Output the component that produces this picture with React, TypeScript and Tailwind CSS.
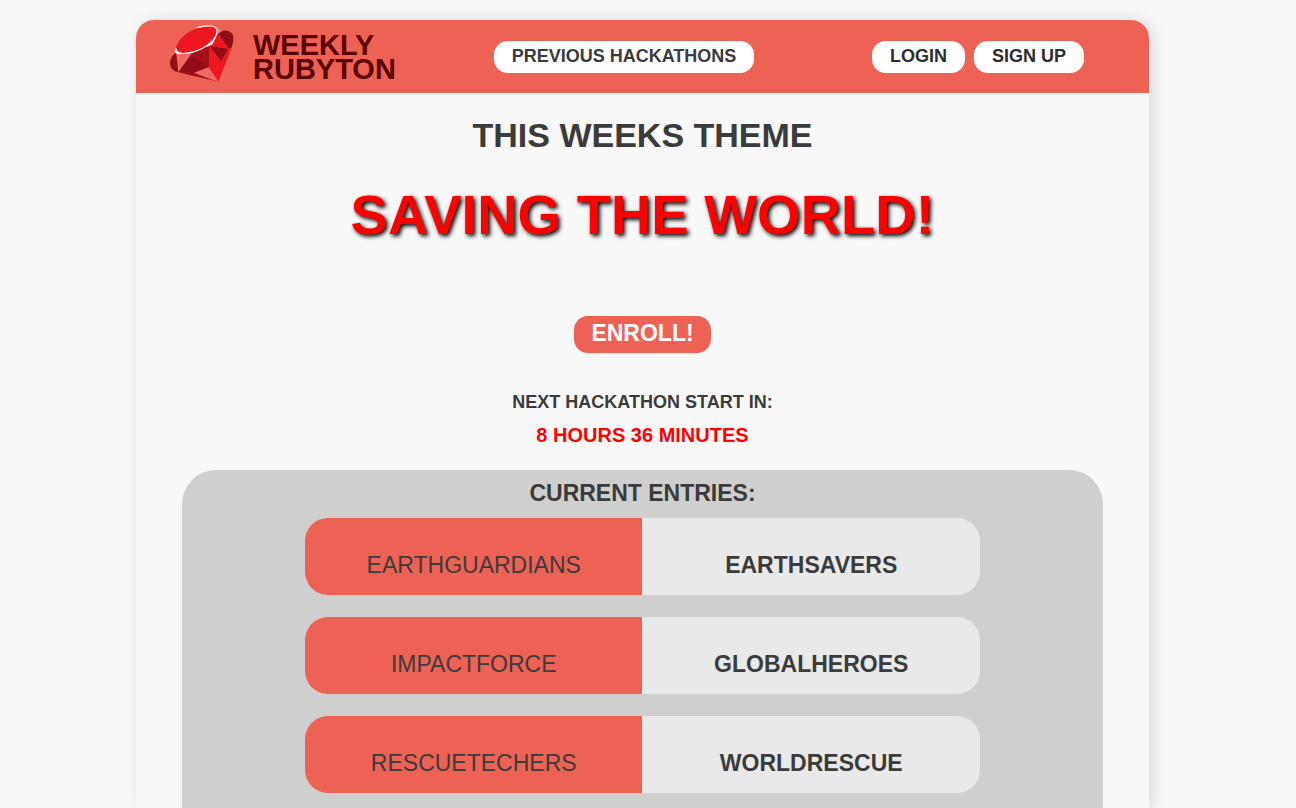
const entries = [
  ["EARTHGUARDIANS", "EARTHSAVERS"],
  ["IMPACTFORCE", "GLOBALHEROES"],
  ["RESCUETECHERS", "WORLDRESCUE"],
];

function RubyIcon() {
  return (
    <svg width="64" height="56" viewBox="0 0 192 168" overflow="visible" aria-hidden="true">
      <path d="M0 112C0 98 7 88 20 78L26 139C9 136 1 127 0 112Z" fill="#920d18" />
      <path d="M18 76L25 139L64 84Z" fill="#ef6a63" />
      <path d="M64 84L25 139L72 141L116 124Z" fill="#920d18" />
      <path d="M62 84L120 58L117 126Z" fill="#a50f1b" />
      <path d="M120 58L174 68L145 168L116 124Z" fill="#ed1722" />
      <path d="M120 60L176 68L153 106Z" fill="#920d18" />
      <path d="M120 60L141 22L176 68Z" fill="#ed1722" />
      <path d="M141 20L156 14C177 11 190 20 190 36C190 48 188 56 184 66L176 68Z" fill="#920d18" />
      <path d="M186 62L145 168L153 106L176 68Z" fill="#ed1722" />
      <path d="M25 139L72 141L145 168Z" fill="#920d18" />
      <path d="M25 139L66 144L145 168Z" fill="#ef6a63" />
      <path d="M25 138L76 140L145 166L60 147Z" fill="#920d18" />
      <path d="M72 141L116 124L145 168Z" fill="#ef6a63" />
      <path d="M137 2L160 13L142 25Z" fill="#f27870" />
      <path d="M18 70C18 46 46 18 84 6C114 -3 143 -3 141 17C140 38 110 66 73 77C44 85 20 86 18 70Z" fill="#ed1722" />
      <path d="M82 5C112 -4 143 -3 141 17C140 38 110 66 73 77C44 85 20 86 18 68" fill="none" stroke="#fff" strokeWidth="3.5" />
      <path d="M18 68V80L34 83M110 61L126 53L137 32" fill="none" stroke="#fff" strokeWidth="4" />
    </svg>
  );
}

const pill =
  "flex h-8 items-center rounded-[14px] bg-white px-[18px] pb-0.5 text-lg font-bold whitespace-nowrap";

export default function App() {
  return (
    <div className="flex min-h-screen flex-col bg-[#f8f8f8] pt-5 pr-[11px] font-['Liberation_Sans',Arial,sans-serif] text-[#3b3b3b]">
      <div className="mx-auto flex w-full max-w-[1013px] flex-1 flex-col rounded-t-[18px] bg-[#f8f8f8] shadow-[4px_0_16px_rgba(0,0,0,0.12)]">
        <header className="grid h-[73px] grid-cols-[1fr_auto_1fr] items-center rounded-t-[18px] bg-[#ee6255] pr-[65px] pl-7">
          <a href="#home" className="flex items-center gap-[19px] justify-self-start pb-1.5 pl-1.5">
            <RubyIcon />
            <span className="pt-1.5 text-[29px] leading-6 font-bold text-[#5a0000]">
              WEEKLY
              <br />
              RUBYTON
            </span>
          </a>
          <nav>
            <a href="#previous" className={pill}>PREVIOUS HACKATHONS</a>
          </nav>
          <div className="flex gap-[9px] justify-self-end text-[#2d2d2d]">
            <a href="#login" className={pill}>LOGIN</a>
            <a href="#signup" className={pill}>SIGN UP</a>
          </div>
        </header>

        <main className="flex flex-1 flex-col items-center">
          <h2 className="mt-[22px] text-[34px] leading-10 font-bold">THIS WEEKS THEME</h2>
          <h1 className="mt-7 text-[56px] leading-16 font-bold text-[#ff0000] [text-shadow:2px_2px_4px_#000]">
            SAVING THE WORLD!
          </h1>
          <button
            type="button"
            className="mt-[69px] flex h-[37px] items-center rounded-[14px] bg-[#ee6255] px-[17px] pb-0.5 text-[23px] font-bold text-white"
          >
            ENROLL!
          </button>
          <h3 className="mt-[37px] text-lg leading-6 font-bold">NEXT HACKATHON START IN:</h3>
          <p className="mt-[7px] text-xl leading-7 font-bold text-[#ff0000]">8 HOURS 36 MINUTES</p>

          <section className="mt-[21px] flex w-[91%] flex-1 flex-col items-center rounded-t-[34px] bg-[#cfcfcf] pt-[7px]">
            <h2 className="text-[23px] leading-8 font-bold">CURRENT ENTRIES:</h2>
            <ul className="mt-[9px] flex w-full max-w-[675px] flex-col gap-[22px] pb-[15px]">
              {entries.map(([left, right]) => (
                <li key={left} className="grid h-[77px] grid-cols-2 overflow-hidden rounded-[23px] text-center text-[23px] leading-8">
                  <span className="bg-[#ee6255] pt-[31px]">{left}</span>
                  <span className="bg-[#e9e9e9] pt-[31px] font-bold">{right}</span>
                </li>
              ))}
            </ul>
          </section>
        </main>
      </div>
    </div>
  );
}
